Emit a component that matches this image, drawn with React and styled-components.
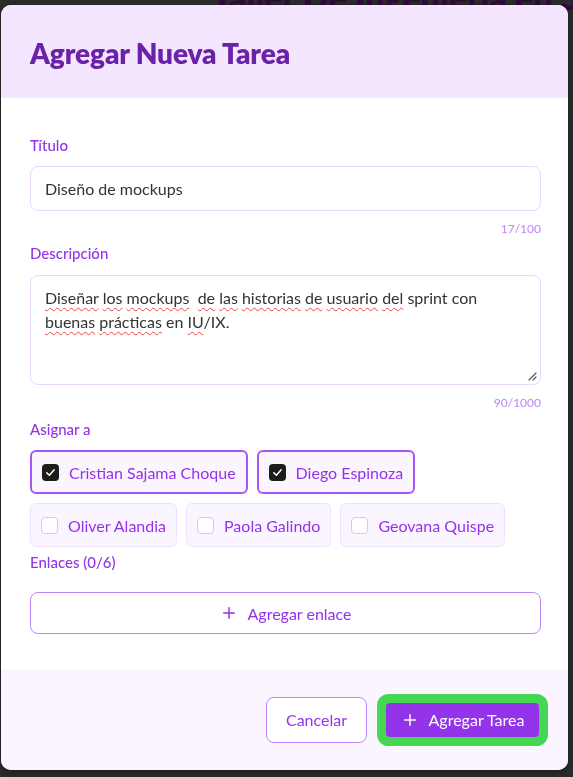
import React from 'react'
import styled, { createGlobalStyle } from 'styled-components'
import { Plus } from 'lucide-react'

const purple = '#9333ea'
const purpleDark = '#6b21a8'
const purpleSoft = '#c084fc'
const lilac = '#e9d5ff'

const GlobalStyle = createGlobalStyle`
  html, body {
    margin: 0;
    padding: 0;
    background: #2b2b2b;
    font-family: Lato, "Noto Sans", sans-serif;
  }
  * { box-sizing: border-box; }
`

const members = [
  { name: 'Cristian Sajama Choque', checked: true },
  { name: 'Diego Espinoza', checked: true },
  { name: 'Oliver Alandia', checked: false },
  { name: 'Paola Galindo', checked: false },
  { name: 'Geovana Quispe', checked: false },
]

export default function App() {
  return <>
    <GlobalStyle />
    <Page>
      <BackTitle>Taller De Ingeniería en Software</BackTitle>
    </Page>
    <Overlay>
      <Modal>
        <Header>
          <Title>Agregar Nueva Tarea</Title>
        </Header>
        <Body>
          <Label>Título</Label>
          <Input defaultValue="Diseño de mockups" />
          <Counter>17/100</Counter>

          <Label $top={6}>Descripción</Label>
          <TextArea>
            <Typo>Diseñar</Typo> <Typo>los</Typo> <Typo>mockups</Typo>{'\u00a0 '}
            <Typo>de</Typo> <Typo>las</Typo> <Typo>historias</Typo> <Typo>de</Typo>{' '}
            <Typo>usuario</Typo> <Typo>del</Typo> sprint con <Typo>buenas</Typo>{' '}
            <Typo>prácticas</Typo> en <Typo>IU</Typo>/IX.
            <Grip viewBox="0 0 10 10">
              <path d="M9 2 L2 9 M9 6 L6 9" stroke="#555" strokeWidth="1.2" strokeLinecap="round" />
            </Grip>
          </TextArea>
          <Counter>90/1000</Counter>

          <Label $top={8}>Asignar a</Label>
          <Chips>
            {members.map(m => (
              <Chip key={m.name} $checked={m.checked}>
                <Box $checked={m.checked}>
                  {m.checked && (
                    <svg width="11" height="11" viewBox="0 0 12 12">
                      <path d="M2 6.4 L4.8 9 L10 3" fill="none" stroke="#fff" strokeWidth="1.6" strokeLinecap="round" strokeLinejoin="round" />
                    </svg>
                  )}
                </Box>
                {m.name}
              </Chip>
            ))}
          </Chips>

          <Label $top={5}>Enlaces (0/6)</Label>
          <LinkButton type="button">
            <Plus size={18} strokeWidth={2} />
            Agregar enlace
          </LinkButton>
        </Body>
        <Footer>
          <CancelButton type="button">Cancelar</CancelButton>
          <SubmitButton type="button">
            <Plus size={18} strokeWidth={2} />
            Agregar Tarea
          </SubmitButton>
        </Footer>
      </Modal>
    </Overlay>
  </>
}

const Page = styled.div`
  height: 777px;
  overflow: hidden;
  background: #2b2b2b;
`

const BackTitle = styled.h1`
  margin: -24px 0 0 212px;
  font-size: 34px;
  font-weight: 800;
  color: #300b3c;
  white-space: nowrap;
`

const Overlay = styled.div`
  position: fixed;
  inset: 0;
  padding: 5px 5px 7px 1px;
  display: flex;
  align-items: flex-start;
`

const Modal = styled.div`
  width: 567px;
  background: #fff;
  border-radius: 10px;
  overflow: hidden;
  display: flex;
  flex-direction: column;
  box-shadow: 0 2px 6px rgba(0, 0, 0, 0.35);
`

const Header = styled.div`
  height: 93px;
  background: #f3e6fe;
  display: flex;
  align-items: center;
  padding: 3px 29px 0;
`

const Title = styled.h2`
  margin: 0;
  font-size: 28px;
  font-weight: 800;
  color: ${purpleDark};
  letter-spacing: -0.1px;
`

const Body = styled.div`
  height: 571px;
  padding: 37px 27px 0 29px;
  display: flex;
  flex-direction: column;
`

const Label = styled.div`
  margin-top: ${p => p.$top || 0}px;
  margin-bottom: 11px;
  font-size: 15px;
  line-height: 20px;
  font-weight: 500;
  color: ${purple};
`

const Input = styled.input`
  height: 45px;
  width: 100%;
  padding: 0 14px;
  border: 1px solid ${lilac};
  border-radius: 8px;
  font-family: inherit;
  font-size: 16px;
  color: #333;
  outline: none;
`

const TextArea = styled.div`
  position: relative;
  height: 110px;
  margin-top: 1px;
  padding: 10px 14px;
  border: 1px solid ${lilac};
  border-radius: 8px;
  font-size: 16px;
  line-height: 24px;
  color: #333;
`

const Typo = styled.span`
  text-decoration: underline wavy #ef4444;
  text-decoration-thickness: 1px;
  text-underline-offset: 3px;
`

const Grip = styled.svg`
  position: absolute;
  right: 3px;
  bottom: 3px;
  width: 10px;
  height: 10px;
`

const Counter = styled.div`
  margin-top: 10px;
  text-align: right;
  font-size: 12px;
  line-height: 16px;
  color: ${purpleSoft};
`

const Chips = styled.div`
  display: flex;
  flex-wrap: wrap;
  gap: 9px 9px;
`

const Chip = styled.label`
  height: 44px;
  display: flex;
  align-items: center;
  gap: 10px;
  padding: 0 ${p => (p.$checked ? 10 : 10)}px;
  border: ${p => (p.$checked ? `2px solid #a855f7` : `1px solid #f0e2fd`)};
  border-radius: 6px;
  background: #faf5ff;
  font-size: 16px;
  color: ${purple};
  cursor: pointer;
`

const Box = styled.span`
  width: 17px;
  height: 17px;
  display: flex;
  align-items: center;
  justify-content: center;
  border-radius: 4px;
  background: ${p => (p.$checked ? '#1c1c1c' : '#fff')};
  border: ${p => (p.$checked ? 'none' : `1.5px solid #dcc0fb`)};
`

const LinkButton = styled.button`
  margin-top: 9px;
  height: 42px;
  width: 100%;
  display: flex;
  align-items: center;
  justify-content: center;
  gap: 10px;
  border: 1px solid ${purpleSoft};
  border-radius: 8px;
  background: #fff;
  font-family: inherit;
  font-size: 16px;
  color: ${purple};
  cursor: pointer;
`

const Footer = styled.div`
  height: 101px;
  background: #faf5ff;
  display: flex;
  align-items: center;
  justify-content: flex-end;
  gap: 19px;
  padding: 0 29px;
`

const CancelButton = styled.button`
  width: 101px;
  height: 46px;
  border: 1px solid ${purpleSoft};
  border-radius: 8px;
  background: #fff;
  font-family: inherit;
  font-size: 16px;
  color: ${purple};
  cursor: pointer;
`

const SubmitButton = styled.button`
  width: 153px;
  height: 34px;
  display: flex;
  align-items: center;
  justify-content: center;
  gap: 10px;
  border: none;
  border-radius: 4px;
  background: ${purple};
  box-shadow: 0 0 0 9px #44d752;
  font-family: inherit;
  font-size: 16px;
  color: #fff;
  cursor: pointer;
`
